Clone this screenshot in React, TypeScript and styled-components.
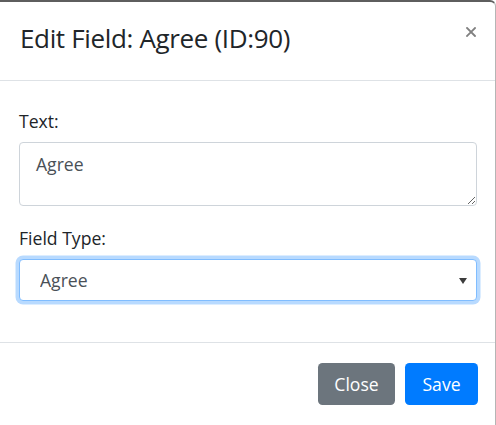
import React from 'react';
import styled, { createGlobalStyle } from 'styled-components';

const GlobalStyle = createGlobalStyle`
  html, body {
    margin: 0;
    padding: 0;
    background: #ffffff;
  }
  body {
    font-family: "Open Sans", "Noto Sans", Arial, sans-serif;
    color: #212529;
  }
`;

const fieldTypes = ['Agree', 'Text', 'Checkbox', 'Radio', 'Date'];

const EditFieldModal: React.FC = () => {
  return (
    <StyledModal>
      <StyledHeader>
        <StyledTitle>Edit Field: Agree (ID:90)</StyledTitle>
        <StyledCloseX type="button" aria-label="Close">
          <svg width="10" height="10" viewBox="0 0 10 10">
            <path d="M1 1 L9 9 M9 1 L1 9" stroke="currentColor" strokeWidth="1.8" strokeLinecap="square" />
          </svg>
        </StyledCloseX>
      </StyledHeader>

      <StyledBody>
        <StyledGroup>
          <StyledLabel htmlFor="field-text">Text:</StyledLabel>
          <StyledTextarea id="field-text" defaultValue="Agree" />
        </StyledGroup>

        <StyledGroup>
          <StyledLabel htmlFor="field-type">Field Type:</StyledLabel>
          <StyledSelectWrap>
            <StyledSelect id="field-type" defaultValue="Agree">
              {fieldTypes.map((t) => (
                <option key={t} value={t}>
                  {t}
                </option>
              ))}
            </StyledSelect>
            <StyledCaret width="8" height="6" viewBox="0 0 8 6">
              <path d="M0 0 H8 L4 6 Z" fill="currentColor" />
            </StyledCaret>
          </StyledSelectWrap>
        </StyledGroup>
      </StyledBody>

      <StyledFooter>
        <StyledButton type="button" $variant="secondary" $width={77}>
          Close
        </StyledButton>
        <StyledButton type="button" $variant="primary" $width={73}>
          Save
        </StyledButton>
      </StyledFooter>
    </StyledModal>
  );
};

const App: React.FC = () => (
  <>
    <GlobalStyle />
    <EditFieldModal />
  </>
);

const StyledModal = styled.div`
  box-sizing: border-box;
  width: 496px;
  height: 425px;
  display: flex;
  flex-direction: column;
  background: #fff;
  border-top: 2px solid #5e5e5e;
  border-right: 1px solid #b5b5b5;
  border-radius: 0 6px 0 0;
`;

const StyledHeader = styled.div`
  box-sizing: border-box;
  height: 79px;
  display: flex;
  justify-content: space-between;
  align-items: flex-start;
  padding: 0 19px 0 20px;
  border-bottom: 1px solid #dee2e6;
`;

const StyledTitle = styled.h4`
  margin: 0;
  padding-top: 18px;
  font-size: 26px;
  font-weight: 400;
  line-height: 36px;
  letter-spacing: -0.35px;
  color: #212529;
`;

const StyledCloseX = styled.button`
  margin-top: 25px;
  margin-right: 0;
  padding: 0;
  border: 0;
  background: transparent;
  color: #808080;
  display: flex;
  cursor: pointer;
`;

const StyledBody = styled.div`
  box-sizing: border-box;
  height: 262px;
  padding: 27px 18px 0 19px;
  border-bottom: 1px solid #dee2e6;
`;

const StyledGroup = styled.div`
  & + & {
    margin-top: 19px;
  }
`;

const StyledLabel = styled.label`
  display: block;
  margin-bottom: 8px;
  font-size: 17.6px;
  line-height: 26px;
  color: #212529;
`;

const StyledTextarea = styled.textarea`
  box-sizing: border-box;
  display: block;
  width: 100%;
  height: 64px;
  margin: 0;
  padding: 8px 16px;
  border: 1px solid #ced4da;
  border-radius: 4px;
  font-family: "Open Sans", "Noto Sans", Arial, sans-serif;
  font-size: 17.6px;
  line-height: 26px;
  color: #495057;
  resize: vertical;
  outline: none;
`;

const StyledSelectWrap = styled.div`
  position: relative;
`;

const StyledSelect = styled.select`
  box-sizing: border-box;
  display: block;
  width: 100%;
  height: 42px;
  margin: 0;
  padding: 0 30px 0 20px;
  border: 1px solid #80bdff;
  border-radius: 4px;
  box-shadow: 0 0 0 3.5px rgba(0, 123, 255, 0.28);
  background: #fff;
  appearance: none;
  font-family: "Open Sans", "Noto Sans", Arial, sans-serif;
  font-size: 17.6px;
  line-height: 26px;
  color: #495057;
  outline: none;
`;

const StyledCaret = styled.svg`
  position: absolute;
  right: 10px;
  top: 19px;
  color: #3c3c3c;
  pointer-events: none;
`;

const StyledFooter = styled.div`
  flex: 1;
  display: flex;
  justify-content: flex-end;
  align-items: flex-start;
  gap: 10px;
  padding: 20px 17px 0 0;
`;

const StyledButton = styled.button<{ $variant: 'primary' | 'secondary'; $width: number }>`
  box-sizing: border-box;
  width: ${(p) => p.$width}px;
  height: 42px;
  padding: 0;
  border: 0;
  border-radius: 4.5px;
  background: ${(p) => (p.$variant === 'primary' ? '#007bff' : '#6c757d')};
  color: #fff;
  font-family: "Open Sans", "Noto Sans", Arial, sans-serif;
  font-size: 17.6px;
  line-height: 26px;
  cursor: pointer;
`;

export default App;
